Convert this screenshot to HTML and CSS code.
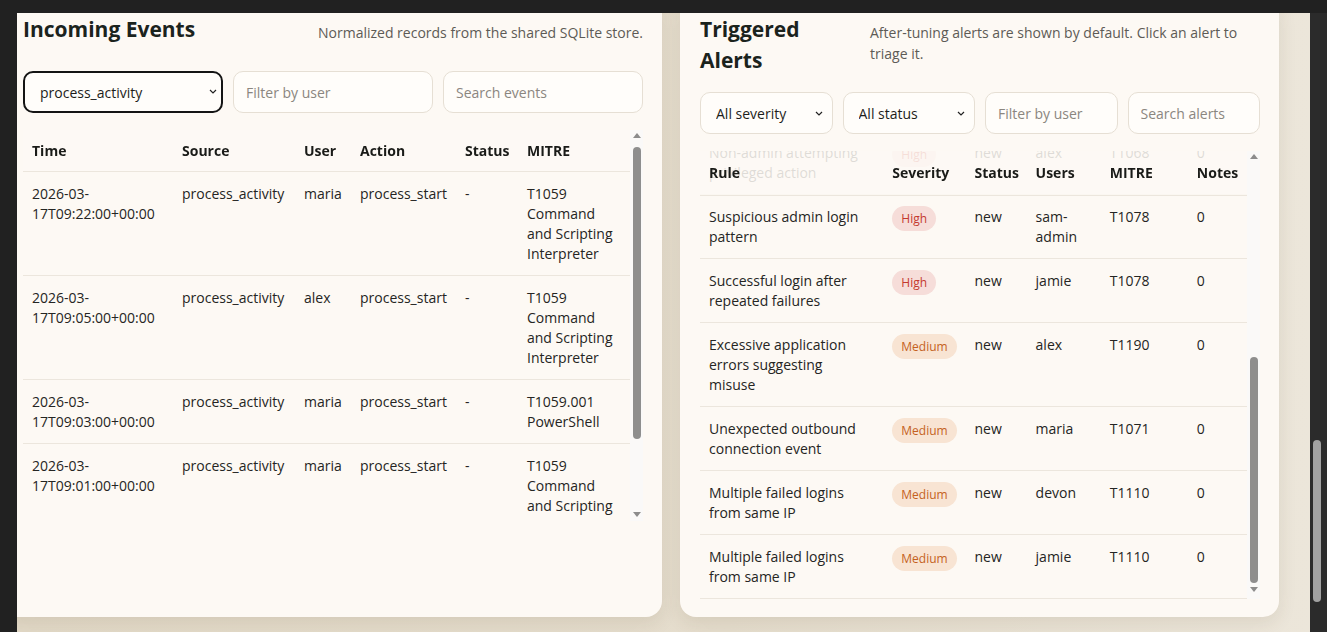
FILE: index.html
```html
<!DOCTYPE html>
<html lang="en">
<head>
  <meta charset="UTF-8" />
  <meta name="viewport" content="width=device-width, initial-scale=1.0" />
  <title>Detection Console</title>
  <link rel="stylesheet" href="styles.css">
</head>
<body>
  <div class="window">
    <div class="viewport">
      <main class="board">

        <section class="panel">
          <header class="panel-head">
            <h2>Incoming Events</h2>
            <p class="panel-desc">Normalized records from the shared SQLite store.</p>
          </header>
          <div class="filters filters-3">
            <label class="select-wrap is-focused">
              <select class="field"><option>process_activity</option></select>
              <svg class="chev" width="8" height="5" viewBox="0 0 8 5"><path d="M1 1l3 3 3-3" fill="none" stroke="#222" stroke-width="1.2"/></svg>
            </label>
            <input class="field" type="text" placeholder="Filter by user" />
            <input class="field" type="text" placeholder="Search events" />
          </div>
          <div class="table-frame events-frame">
            <div class="table-scroll">
              <table class="grid events-grid">
                <colgroup>
                  <col class="c-time"><col class="c-source"><col class="c-user">
                  <col class="c-action"><col class="c-status"><col class="c-mitre">
                </colgroup>
                <thead>
                  <tr><th>Time</th><th>Source</th><th>User</th><th>Action</th><th>Status</th><th>MITRE</th></tr>
                </thead>
                <tbody>
                  <tr><td>2026-03-<wbr>17T09:22:00+00:00</td><td>process_activity</td><td>maria</td><td>process_start</td><td>-</td><td>T1059 Command and Scripting Interpreter</td></tr>
                  <tr><td>2026-03-<wbr>17T09:05:00+00:00</td><td>process_activity</td><td>alex</td><td>process_start</td><td>-</td><td>T1059 Command and Scripting Interpreter</td></tr>
                  <tr><td>2026-03-<wbr>17T09:03:00+00:00</td><td>process_activity</td><td>maria</td><td>process_start</td><td>-</td><td>T1059.001 PowerShell</td></tr>
                  <tr><td>2026-03-<wbr>17T09:01:00+00:00</td><td>process_activity</td><td>maria</td><td>process_start</td><td>-</td><td>T1059 Command and Scripting Interpreter</td></tr>
                  <tr><td>2026-03-<wbr>17T08:58:00+00:00</td><td>process_activity</td><td>devon</td><td>process_start</td><td>-</td><td>T1059.001 PowerShell</td></tr>
                </tbody>
              </table>
            </div>
            <div class="vbar">
              <svg class="vbar-arrow" width="8" height="5" viewBox="0 0 8 5"><path d="M4 0L8 5H0z" fill="#8c8c8c"/></svg>
              <span class="vbar-thumb events-thumb"></span>
              <svg class="vbar-arrow vbar-down" width="8" height="5" viewBox="0 0 8 5"><path d="M0 0h8L4 5z" fill="#8c8c8c"/></svg>
            </div>
          </div>
        </section>

        <section class="panel">
          <header class="panel-head">
            <h2 class="title-narrow">Triggered Alerts</h2>
            <p class="panel-desc desc-left">After-tuning alerts are shown by default. Click an alert to triage it.</p>
          </header>
          <div class="filters filters-4">
            <label class="select-wrap">
              <select class="field"><option>All severity</option><option>High</option><option>Medium</option></select>
              <svg class="chev" width="8" height="5" viewBox="0 0 8 5"><path d="M1 1l3 3 3-3" fill="none" stroke="#222" stroke-width="1.2"/></svg>
            </label>
            <label class="select-wrap">
              <select class="field"><option>All status</option><option>new</option><option>closed</option></select>
              <svg class="chev" width="8" height="5" viewBox="0 0 8 5"><path d="M1 1l3 3 3-3" fill="none" stroke="#222" stroke-width="1.2"/></svg>
            </label>
            <input class="field" type="text" placeholder="Filter by user" />
            <input class="field" type="text" placeholder="Search alerts" />
          </div>
          <div class="table-frame alerts-frame">
            <div class="table-scroll alerts-scroll">
              <table class="grid alerts-grid">
                <colgroup>
                  <col class="c-rule"><col class="c-sev"><col class="c-astatus">
                  <col class="c-users"><col class="c-amitre"><col class="c-notes">
                </colgroup>
                <thead>
                  <tr><th>Rule</th><th>Severity</th><th>Status</th><th>Users</th><th>MITRE</th><th>Notes</th></tr>
                </thead>
                <tbody>
                  <tr><td class="rule">Encoded PowerShell command execution</td><td><span class="pill high">High</span></td><td>new</td><td>maria</td><td>T1027</td><td>0</td></tr>
                  <tr><td class="rule">New local administrator account created</td><td><span class="pill high">High</span></td><td>new</td><td>devon</td><td>T1136</td><td>0</td></tr>
                  <tr><td class="rule">Login from unusual geographic location</td><td><span class="pill high">High</span></td><td>new</td><td>jamie</td><td>T1078</td><td>0</td></tr>
                  <tr><td class="rule">Suspicious process spawned by Office app</td><td><span class="pill high">High</span></td><td>new</td><td>alex</td><td>T1204</td><td>0</td></tr>
                  <tr><td class="rule">Possible data staging in temp directory</td><td><span class="pill medium">Medium</span></td><td>new</td><td>maria</td><td>T1074</td><td>0</td></tr>
                  <tr><td class="rule">Non-admin attempting privileged action</td><td><span class="pill high">High</span></td><td>new</td><td>alex</td><td>T1068</td><td>0</td></tr>
                  <tr><td class="rule">Suspicious admin login pattern</td><td><span class="pill high">High</span></td><td>new</td><td>sam-admin</td><td>T1078</td><td>0</td></tr>
                  <tr><td class="rule">Successful login after repeated failures</td><td><span class="pill high">High</span></td><td>new</td><td>jamie</td><td>T1078</td><td>0</td></tr>
                  <tr><td class="rule">Excessive application errors suggesting misuse</td><td><span class="pill medium">Medium</span></td><td>new</td><td>alex</td><td>T1190</td><td>0</td></tr>
                  <tr><td class="rule">Unexpected outbound connection event</td><td><span class="pill medium">Medium</span></td><td>new</td><td>maria</td><td>T1071</td><td>0</td></tr>
                  <tr><td class="rule">Multiple failed logins from same IP</td><td><span class="pill medium">Medium</span></td><td>new</td><td>devon</td><td>T1110</td><td>0</td></tr>
                  <tr><td class="rule">Multiple failed logins from same IP</td><td><span class="pill medium">Medium</span></td><td>new</td><td>jamie</td><td>T1110</td><td>0</td></tr>
                </tbody>
              </table>
            </div>
            <div class="vbar">
              <svg class="vbar-arrow" width="8" height="5" viewBox="0 0 8 5"><path d="M4 0L8 5H0z" fill="#8c8c8c"/></svg>
              <span class="vbar-thumb alerts-thumb"></span>
              <svg class="vbar-arrow vbar-down" width="8" height="5" viewBox="0 0 8 5"><path d="M0 0h8L4 5z" fill="#8c8c8c"/></svg>
            </div>
          </div>
        </section>

      </main>
    </div>
    <div class="page-scroll"><span class="page-thumb"></span></div>
  </div>

  <script>
    const alertsBox = document.querySelector('.alerts-scroll');
    alertsBox.scrollTop = alertsBox.scrollHeight;
  </script>
</body>
</html>
```

FILE: styles.css
```css
* { box-sizing: border-box; }
html, body { margin: 0; height: 100%; }
body { background: #212121; font-family: "Open Sans", "Noto Sans", sans-serif; font-size: 14px; color: #252523; overflow: hidden; }

.window { display: flex; height: 632px; padding: 13px 0 0 17px; }
.viewport { flex: 1; overflow: hidden; background: linear-gradient(90deg, #e2d9c7 0%, #e5ddcd 55%, #ece6da 100%); }
.page-scroll { width: 17px; background: #2b2b2b; padding: 427px 0 0 3px; }
.page-thumb { display: block; width: 8px; height: 162px; border-radius: 4px; background: #a2a2a2; }

.board { display: grid; grid-template-columns: 659px 599px; column-gap: 18px; margin: -19px 0 0 -14px; }

.panel { background: #fdf9f4; border-radius: 16px; padding: 20px 19px 18px 20px; box-shadow: 0 6px 18px rgba(80, 62, 30, 0.10); }

.panel-head { display: flex; justify-content: space-between; align-items: flex-start; gap: 20px; min-height: 40px; margin-bottom: 17px; }
.panel-head h2 { margin: 0; font-size: 21px; line-height: 30.5px; font-weight: 700; color: #1b231d; }
.panel-head .title-narrow { flex: 0 0 150px; }
.panel-desc { margin: 8px 0 0; line-height: 21px; color: #5d5b56; }
.desc-left { flex: 1; }

.filters { display: grid; gap: 10px; margin-bottom: 17px; }
.filters-3 { grid-template-columns: repeat(3, 1fr); }
.filters-4 { grid-template-columns: repeat(4, 1fr); }

.field { width: 100%; height: 42px; padding: 0 12px; border: 1px solid #e6dfd4; border-radius: 10px; background: #fffdfa; font: inherit; color: #1d1d1b; outline: none; }
.field::placeholder { color: #8b8680; }
.select-wrap { position: relative; display: block; }
.select-wrap select { appearance: none; -webkit-appearance: none; padding-left: 15px; }
.select-wrap .chev { position: absolute; right: 10px; top: 19px; pointer-events: none; }
.select-wrap.is-focused select { border: 2px solid #141414; }
.select-wrap.is-focused .chev { right: 6px; top: 18px; }

/* table + drawn scrollbar */
.table-frame { display: flex; }
.events-frame { height: 391px; }
.alerts-frame { height: 448px; }
.table-scroll { flex: 1; min-width: 0; overflow: hidden; }

.vbar { flex: 0 0 13px; display: flex; flex-direction: column; align-items: center; padding: 3px 0 4px; background: #faf9f8; }
.vbar-arrow { flex: none; }
.vbar-down { margin-top: auto; }
.vbar-thumb { flex: none; width: 8px; border-radius: 4px; background: #8e8e8e; }
.events-thumb { margin-top: 9px; height: 292px; }
.alerts-thumb { margin-top: 198px; height: 226px; }
.alerts-frame .vbar { padding-bottom: 7px; }

.grid { width: 100%; table-layout: fixed; border-collapse: separate; border-spacing: 0; }
.grid th, .grid td { text-align: left; vertical-align: top; line-height: 20px; border-bottom: 1px solid #ece6dd; }
.grid th { position: sticky; top: 0; z-index: 1; padding: 11px 9px 10px; font-weight: 700; color: #1a1b18; background: rgba(253, 249, 244, 0.86); }
.grid td { padding: 12px 9px 11px; }
.alerts-grid th { padding: 12px 9px; }
.alerts-grid td.rule { padding-right: 14px; }

.c-time { width: 150px; }
.c-source { width: 122px; }
.c-user { width: 56px; }
.c-action { width: 105px; }
.c-status { width: 62px; }
.c-mitre { width: 112px; }

.c-rule { width: 183px; }
.c-sev { width: 82px; }
.c-astatus { width: 61px; }
.c-users { width: 74px; }
.c-amitre { width: 87px; }
.c-notes { width: 59px; }

.pill { display: inline-block; margin-top: -1px; padding: 3px 9px; border-radius: 999px; font-size: 12px; line-height: 19px; }
.pill.high { background: #f6ddd9; color: #c4392f; }
.pill.medium { background: #f8e4d3; color: #c5621e; }
```
